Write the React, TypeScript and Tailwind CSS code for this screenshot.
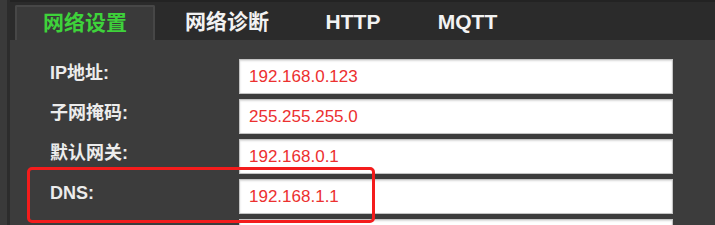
const FONT = { fontFamily: '"Liberation Sans", "Noto Sans CJK SC", sans-serif' };

const TABS = [
  { label: "网络设置", width: "w-[140px]", active: true },
  { label: "网络诊断", width: "w-[144px]", active: false },
  { label: "HTTP", width: "w-[108px]", active: false },
  { label: "MQTT", width: "w-[121px]", active: false },
];

const ROWS = [
  { label: "IP地址:", value: "192.168.0.123" },
  { label: "子网掩码:", value: "255.255.255.0" },
  { label: "默认网关:", value: "192.168.0.1" },
  { label: "DNS:", value: "192.168.1.1" },
  { label: "", value: "" },
];

export default function App() {
  return (
    <div
      className="relative flex w-[715px] h-[225px] overflow-hidden bg-[#3c3c3c]"
      style={FONT}
    >
      <div className="w-[7px] shrink-0 bg-[#3a3a3a]" />
      <div className="w-[3px] shrink-0 bg-[#2c2c2c]" />
      <div className="flex flex-1 flex-col">
        <div className="flex h-[40px] shrink-0 items-end border-t-2 border-[#232323] bg-[#2b2b2b] pl-[5px]">
          {TABS.map((t) =>
            t.active ? (
              <div
                key={t.label}
                className={`${t.width} flex h-[35px] items-center justify-center rounded-t-[2px] border-x-2 border-t-2 border-[#474747] bg-[#3a3a3a] pb-[1px] text-[21px] font-bold text-[#3ed23a]`}
              >
                {t.label}
              </div>
            ) : (
              <div
                key={t.label}
                className={`${t.width} flex h-[35px] items-center justify-center pb-[1px] text-[21px] font-bold text-[#f2f2f2]`}
              >
                {t.label}
              </div>
            ),
          )}
        </div>
        <div className="flex flex-col gap-[5px] pt-[19px]">
          {ROWS.map((r, i) => (
            <div key={i} className="flex h-[35px] shrink-0 items-center">
              <div className="w-[229px] shrink-0 pb-[6px] pl-[40px] text-[18px] font-bold text-[#ececec]">
                {r.label}
              </div>
              <div className="flex h-[35px] w-[434px] shrink-0 items-center border border-[#c4c4c4] bg-white pl-[9px] text-[17px] text-[#ec3030] shadow-[inset_0_1px_2px_rgba(0,0,0,0.15)]">
                {r.value}
              </div>
            </div>
          ))}
        </div>
      </div>
      <div className="absolute left-[27px] top-[167px] h-[56px] w-[348px] rounded-[5px] border-[3px] border-[#f41c1c]" />
    </div>
  );
}
